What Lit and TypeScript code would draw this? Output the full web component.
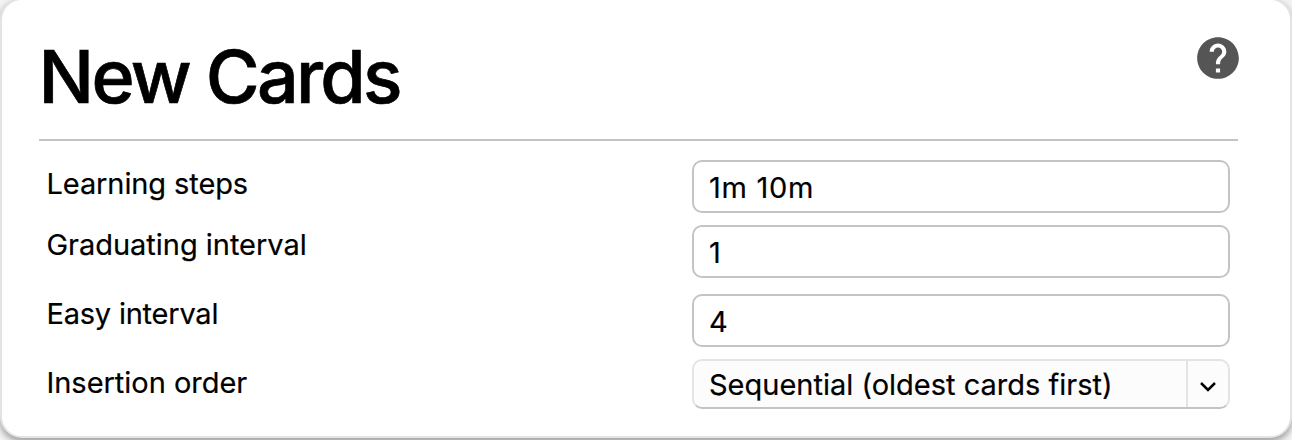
import { LitElement, html, css, svg } from "lit";
import { customElement, property } from "lit/decorators.js";

const helpIcon = svg`<path fill="#555" d="M12 2C6.48 2 2 6.48 2 12s4.48 10 10 10 10-4.48 10-10S17.52 2 12 2zm1 17h-2v-2h2v2zm2.07-7.75-.9.92C13.45 12.9 13 13.5 13 15h-2v-.5c0-1.1.45-2.1 1.17-2.83l1.24-1.26c.37-.36.59-.86.59-1.41 0-1.1-.9-2-2-2s-2 .9-2 2H8c0-2.21 1.79-4 4-4s4 1.79 4 4c0 .88-.36 1.68-.93 2.25z"/>`;

@customElement("option-row")
class OptionRow extends LitElement {
  @property() label = "";
  static styles = css`
    :host { display: grid; grid-template-columns: 645px 538px; align-items: start; }
    .label {
      font-size: 29px; line-height: 36px; letter-spacing: var(--label-tracking, -0.1px);
      white-space: nowrap; padding-top: var(--label-top, 6px); margin-left: -0.5px;
    }
  `;
  render() {
    return html`<div class="label">${this.label}</div><slot></slot>`;
  }
}

@customElement("app-root")
class AppRoot extends LitElement {
  static styles = css`
    :host {
      display: block; height: 440px; overflow: hidden; background: #f5f5f5;
      font-family: Inter, "Liberation Sans", sans-serif; color: #000;
      -webkit-text-stroke: 0.2px #000;
    }
    .card {
      box-sizing: border-box; height: 440px; margin-top: -2px; background: #fff;
      border: 2px solid #e4e4e4; border-radius: 22px; padding: 0 52px 0 37px;
      box-shadow: 0 4px 6px rgba(0,0,0,.28), 0 2px 12px rgba(0,0,0,.12);
    }
    .clip { display: flow-root; height: 440px; overflow: hidden; }
    .header {
      display: flex; justify-content: space-between; align-items: flex-start;
      box-sizing: border-box; height: 141px; border-bottom: 2px solid #c4c4c4;
    }
    h1 {
      margin: 32px 0 0 -0.5px; font-size: 73.5px; line-height: 90px; font-weight: 550;
      letter-spacing: -2.7px; white-space: nowrap; -webkit-text-stroke: 0.7px #000;
    }
    .help { display: block; width: 50px; height: 50px; margin: 33px -5px 0 0; }
    .rows { display: grid; grid-template-rows: 65px 69px 65px 50px; padding: 19px 0 0 8px; }
    .steps { --label-tracking: -0.1px; }
    .graduating { --label-tracking: -0.03px; --label-top: 2px; }
    .easy { --label-tracking: -0.22px; --label-top: 2px; }
    .order { --label-tracking: -0.03px; }
    .field {
      box-sizing: border-box; height: 53px; border: 2px solid #c4c4c4; border-radius: 10px;
      padding: 0 15px; font-size: 29px; line-height: 51px; white-space: nowrap;
    }
    .select {
      box-sizing: border-box; height: 50px; display: flex; background: #fcfcfc;
      border: 2px solid #e4e4e4; border-bottom-color: #c4c4c4; border-radius: 10px;
      font-size: 29px; line-height: 47px; white-space: nowrap;
    }
    .value { flex: 1; padding-left: 15px; letter-spacing: 0; }
    .arrow { box-sizing: border-box; width: 42px; border-left: 2px solid #e4e4e4; display: grid; place-items: center; }
    .arrow svg { display: block; margin: 6px 1px 0 0; }
    .duration { letter-spacing: 0.7px; }
  `;
  render() {
    return html`<div class="clip"><section class="card">
      <header class="header">
        <h1>New Cards</h1>
        <svg class="help" viewBox="0 0 24 24">${helpIcon}</svg>
      </header>
      <div class="rows">
        <option-row class="steps" label="Learning steps"><div class="field duration">1m 10m</div></option-row>
        <option-row class="graduating" label="Graduating interval"><div class="field">1</div></option-row>
        <option-row class="easy" label="Easy interval"><div class="field">4</div></option-row>
        <option-row class="order" label="Insertion order"><div class="select">
          <span class="value">Sequential (oldest cards first)</span>
          <span class="arrow"><svg width="18" height="12" viewBox="0 0 18 12"><path d="M2 2l7 7 7-7" fill="none" stroke="#000" stroke-width="2.5"/></svg></span>
        </div></option-row>
      </div>
    </section></div>`;
  }
}
